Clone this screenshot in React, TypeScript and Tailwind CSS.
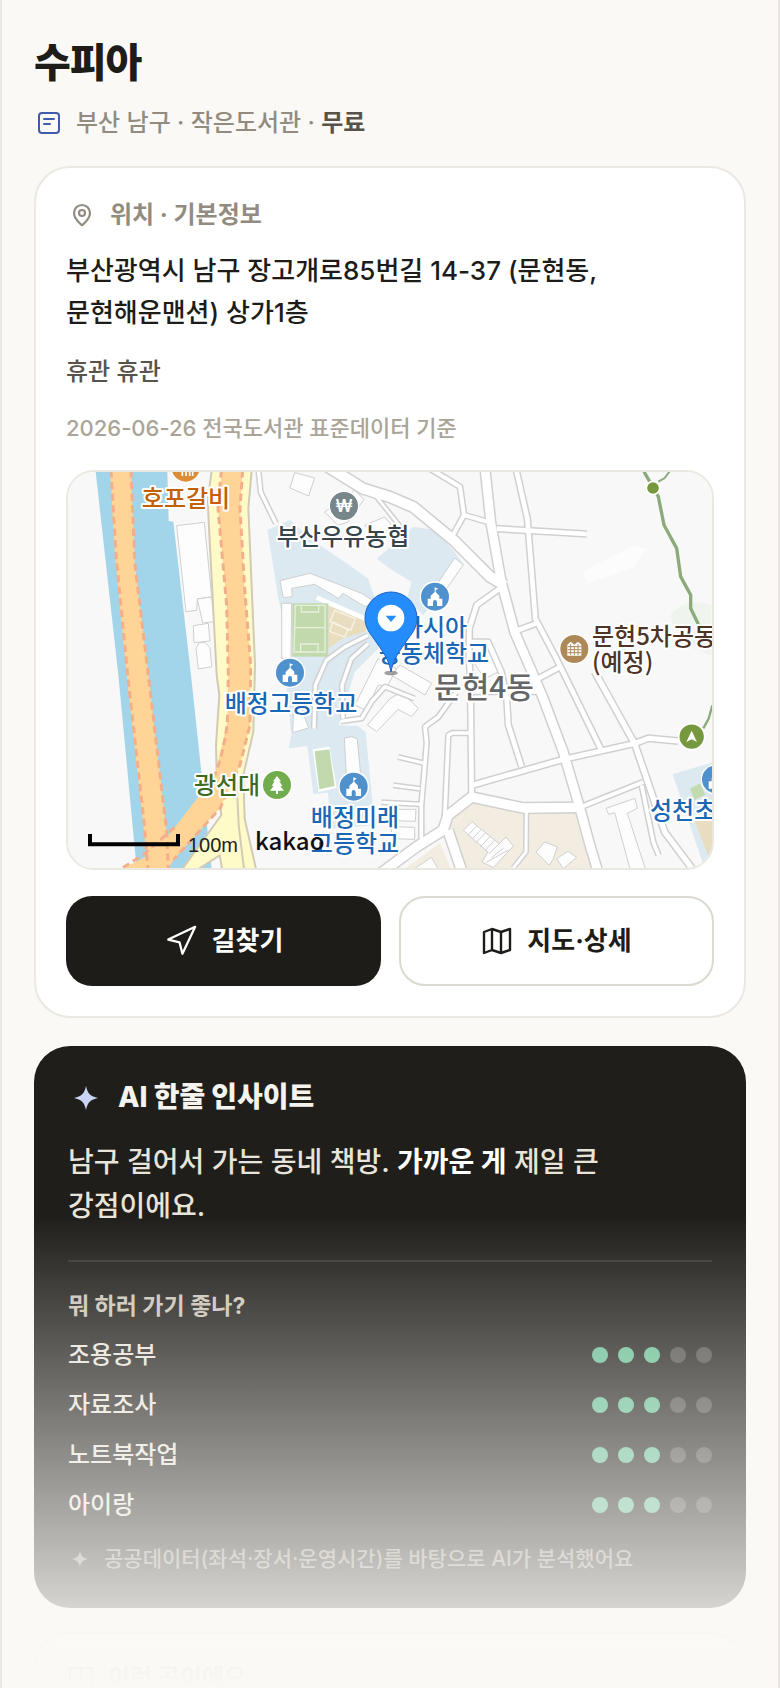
import { MapPin, Navigation } from 'lucide-react';

const fits = [
  { label: '조용공부', score: 3 },
  { label: '자료조사', score: 3 },
  { label: '노트북작업', score: 3 },
  { label: '아이랑', score: 3 },
];

// [points, width]
const roads: [string, number][] = [
  ['740,-40 886,50 966,75 1036,105 1156,204 1266,314 1311,340', 30],
  ['921,69 1010,180', 8],
  ['1251,-10 1268,149 1300,330 1340,480 1396,609 1426,680 1486,840 1536,1010 1566,1120 1590,1200', 26],
  ['1344,-10 1378,140 1391,300 1402,440 1460,550 1485,600 1600,834', 14],
  ['1086,-10 1176,44 1188,129 1261,150', 12],
  ['1188,129 1152,195', 12],
  ['1286,170 1556,186', 14],
  ['1296,349 1226,399 1204,469 1203,560 1206,600 1208,700 1211,965', 14],
  ['1351,474 1406,454', 14],
  ['1406,622 1476,585', 14],
  ['1204,510 1260,510 1300,600 1316,679 1321,759 1361,884', 14],
  ['1211,660 1420,660', 10],
  ['1211,940 1486,862 1701,814 1741,799 1830,807', 15],
  ['1580,599 1700,815 1736,920 1790,1080 1880,1200', 16],
  ['930,1210 1046,1124 1125,1075 1140,1030 1211,975 1366,1008 1540,1006', 28],
  ['1536,1006 1726,930', 12],
  ['1140,1075 1182,1200', 28],
  ['1375,1010 1374,1140 1336,1188', 9],
  ['1060,1100 1060,1000 1076,814 1071,764 1111,735 1165,660', 11],
  ['990,855 1066,873', 9],
  ['976,940 1056,950', 9],
  ['940,991 1056,997', 9],
  ['1130,1040 1141,790 1152,783 1205,783', 11],
  ['1721,940 1756,1110 1772,1150', 11],
  ['571,-10 578,60 624,155', 10],
  ['738,770 742,640 775,565 830,525 900,490', 10],
  ['818,748 881,739 911,689 951,644 990,660 1040,680', 10],
  ['825,740 822,640 850,560 900,515', 10],
];

const buildings = [
  '326,161 409,151 431,374 388,381 386,415 354,419',
  '388,381 431,375 438,449 404,453',
  '376,461 421,454 426,507 378,512',
  '384,529 394,512 411,512 426,527 431,584 391,591',
  '680,2 740,18 722,72 666,48',
  '770,120 830,80 860,55 888,82 840,150 810,160',
  '890,160 950,135 975,165 930,190',
  '636,326 726,304 881,364 921,390 891,404 825,364 811,379 740,337 671,349 673,374 646,377',
  '641,394 671,394 669,559 641,559',
  '677,700 700,710 722,768 674,782',
  '829,798 852,794 868,802 880,930 836,930',
  '861,699 930,560 985,590 960,640 930,640 895,715',
  '971,610 996,579 1091,634 1071,669',
  '898,759 966,680 1000,660 1051,709 1031,734 990,712 926,779',
  '1160,258 1186,278 1150,330 1120,370 1098,350',
  '1186,492 1260,520 1290,600 1250,620 1210,560',
  '970,1012 1044,1012 1042,1048 970,1046',
  '970,1064 1040,1066 1040,1102 970,1100',
  '1614,1009 1701,979 1708,1009 1678,1024 1732,1190 1686,1190 1640,1022 1622,1027',
  '1186,1075 1212,1049 1262,1090 1294,1115 1314,1095 1336,1122 1276,1187 1242,1170 1260,1140',
  '1404,1140 1430,1110 1468,1125 1456,1160 1444,1180',
  '1466,1160 1500,1138 1526,1156 1486,1190',
  '1040,1190 1090,1156 1110,1190',
];

const labels = [
  { text: '호포갈비', x: 118, y: 35, fill: '#c25f00' },
  { text: '부산우유농협', x: 275, y: 73, fill: '#36454c' },
  { text: '아시아', x: 366, y: 164, fill: '#1a67b5' },
  { text: '공동체학교', x: 366, y: 190, fill: '#1a67b5' },
  { text: '배정고등학교', x: 223, y: 240, fill: '#1a67b5' },
  { text: '광선대', x: 159, y: 322, fill: '#3d6a22' },
  { text: '배정미래', x: 287, y: 354, fill: '#1a67b5' },
  { text: '고등학교', x: 287, y: 380, fill: '#1a67b5' },
];

function SchoolMark({ x, y }: { x: number; y: number }) {
  return (
    <g transform={`translate(${x} ${y})`}>
      <circle r="46" fill="#fff" />
      <circle r="42" fill="#4f91cd" />
      <path
        d="M-1 -28V-14L-13 -3V6H-22V28H-6V16A6 6 0 0 1 6 16V28H22V6H13V-3L2 -14V-20L10 -24Z"
        fill="#fff"
      />
    </g>
  );
}

function LocationMap() {
  return (
    <svg
      viewBox="0 0 644 396"
      preserveAspectRatio="xMidYMid slice"
      role="img"
      aria-label="위치 지도"
      className="block h-full w-full font-['Noto_Sans_CJK_KR',sans-serif] font-medium"
    >
      <rect width="644" height="396" fill="#f8f8f8" />
      <g transform="scale(0.333333)">
        {/* Water */}
        <path d="M83 -1L151 609L206 1190H431L369 609L316 149L302 147L298 -1Z" fill="#a3d5ea" />

        {/* School grounds */}
        <g fill="#dce9f1">
          <path d="M598 174L666 144L746 214L836 274L900 320L921 380L960 460L930 530L860 600L812 760L870 762L893 780L920 1060L790 1070L780 962L736 966L718 822L662 829L670 790L655 640L640 420L631 379Z" />
          <path d="M926 260L986 210L1036 164L1101 174L1160 240L1185 275L1066 430L1016 385L1031 330L966 290Z" />
          <path d="M1814 907L1940 869V1190H1910Z" />
        </g>
        <path d="M1881 1049L1940 1000V1160L1920 1150Z" fill="#e9ddc0" />
        <path d="M1866 950L1896 934L1912 968L1880 984Z" fill="#c3daaf" />
        <path d="M781 397L896 449L891 479L826 499L781 529Z" fill="#e9ddc0" />
        <g fill="none" stroke="#f8f3e6" strokeWidth="4">
          <path d="M800 415L862 440L848 475L786 450Z" />
          <path d="M795 450L840 472L830 495L785 478Z" />
        </g>
        <path d="M746 377L891 440" stroke="#fff" strokeWidth="14" />

        <rect x="673" y="394" width="108" height="160" fill="#c1d9ad" />
        <g fill="none" stroke="#e6f0dc" strokeWidth="4">
          <path d="M682 400H771V540H678ZM680 467H771M700 400V420H752V400M698 540V516H750V540" />
        </g>
        <path d="M734 832L784 824L806 948L752 960Z" fill="#fff" />
        <path d="M740 838L784 832L800 942L754 952Z" fill="#c1d9ad" />

        {/* Apartment blocks */}
        <g fill="#f3ede1">
          <path d="M1146 1059L1166 1029L1216 989L1370 1018V1130L1331 1188H1186L1146 1100Z" />
          <path d="M1381 1018H1524L1574 1190H1350L1381 1140Z" />
          <path d="M1010 1190L1116 1114L1150 1190Z" />
        </g>
        <path d="M1808 427Q1860 370 1930 400V550Q1880 540 1850 470Q1810 470 1808 427Z" fill="#eff4ef" />
        <path d="M1544 299L1660 240L1690 218L1738 232L1695 288L1560 334Z" fill="#fcfcfc" />

        <g fill="#fdfdfd" stroke="#cfcfcf" strokeWidth="3">
          {buildings.map((points) => (
            <polygon key={points} points={points} />
          ))}
        </g>
        <path
          d="M1200 1090L1226 1062M1212 1101L1240 1072M1224 1112L1252 1083M1238 1124L1266 1094M1251 1136L1280 1104M1262 1146L1294 1115M1270 1158L1306 1128M1256 1170L1320 1135"
          stroke="#cfcfcf"
          strokeWidth="3"
        />

        {/* Streets: casing first, then the surface */}
        <g fill="none" stroke="#d0d0d0" strokeLinejoin="round">
          {roads.map(([points, width]) => (
            <polyline key={points} points={points} strokeWidth={width + 9} />
          ))}
        </g>
        <g fill="none" stroke="#fff" strokeLinejoin="round">
          {roads.map(([points, width]) => (
            <polyline key={points} points={points} strokeWidth={width} />
          ))}
        </g>

        {/* Riverside road */}
        <path
          d="M431 -5L419 89L446 609L454 669L444 819L446 900L460 1029L340 1195H385L455 1150L463 1195H565L530 1040L526 909L556 779L561 579L541 109L551 -5Z"
          fill="#fffbc9"
          stroke="#d2cab4"
          strokeWidth="6"
        />
        <path d="M506 930L512 1060L528 1190" fill="none" stroke="#d2cab4" strokeWidth="6" />

        {/* Highways */}
        <path
          d="M462 -5L450 109L476 400L481 609L478 750L441 909L326 1059L260 1140L160 1192H300L316 1164L456 1009L516 879L546 759L548 579L530 350L516 109L524 -5Z"
          fill="#ffd496"
        />
        <path
          d="M126 -5L141 249L176 609L226 1059L240 1192H301L296 1079L241 609L201 279L189 -5Z"
          fill="#ffd496"
        />
        <g fill="none" stroke="#f3ae8c" strokeWidth="9" strokeDasharray="22 13">
          <path d="M129 -5L144 249L179 609L229 1059L240 1192" />
          <path d="M189 -5L201 279L241 609L296 1079L301 1192" />
          <path d="M460 -5L450 109L476 400L481 609L478 750Q470 830 441 909" />
          <path d="M524 -5L516 109L530 350L548 579L546 759L516 879L456 1009L316 1164" />
          <path d="M320 1066L226 1148L160 1190" />
        </g>

        {/* Walking trail */}
        <g fill="none" stroke="#8cab7b" strokeWidth="10">
          <path d="M1728 -1L1771 74L1788 159L1826 229L1838 314L1868 369V409L1891 457" />
          <path d="M1933 700L1922 740L1906 769" strokeWidth="7" />
          <path d="M1771 29L1790 18L1804 -1" strokeWidth="6" />
        </g>
        <circle cx="1755" cy="48" r="20" fill="#76983f" stroke="#fff" strokeWidth="5" />
        <circle cx="1871" cy="794" r="39" fill="#76983f" stroke="#fff" strokeWidth="5" />
        <path d="M1871 776L1887 810L1871 802L1855 810Z" fill="#fff" />

        {/* Places */}
        <circle cx="353" cy="-13" r="44" fill="#dc8b37" stroke="#fff" strokeWidth="4" />
        <path d="M343 -8V12M354 -8V12M365 -8V12M374 -8V12" stroke="#fff" strokeWidth="5" />
        <circle cx="828" cy="102" r="44" fill="#77868b" stroke="#fff" strokeWidth="4" />
        <circle cx="627" cy="939" r="44" fill="#72ad4d" stroke="#fff" strokeWidth="4" />
        <path
          d="M627 912L639 928H634L643 942H637L648 956H630V966H624V956H606L617 942H611L620 928H615Z"
          fill="#fff"
        />
        <circle cx="1519" cy="531" r="44" fill="#ad8958" stroke="#fff" strokeWidth="4" />
        <path d="M1498 551V518L1508 509L1519 518L1530 509L1540 518V551Z" fill="#fff" />
        <path
          d="M1499 524H1539M1499 533H1539M1499 542H1539M1508 516V549M1519 522V549M1530 516V549"
          stroke="#ad8958"
          strokeWidth="3"
        />
        <SchoolMark x={666} y={602} />
        <SchoolMark x={1101} y={374} />
        <SchoolMark x={857} y={944} />
        <SchoolMark x={1944} y={922} />
      </g>

      <text
        x="276"
        y="40"
        textAnchor="middle"
        fontSize="17"
        fill="#fff"
        className="font-[Inter,sans-serif] font-semibold"
      >
        ₩
      </text>
      <g fontSize="24" stroke="#fff" strokeWidth="4" strokeLinejoin="round" paintOrder="stroke">
        {labels.map((label) => (
          <text key={label.text} x={label.x} y={label.y} textAnchor="middle" fill={label.fill}>
            {label.text}
          </text>
        ))}
        <text x="524" y="173" fill="#4d3426">
          문현5차공동
        </text>
        <text x="524" y="199" fill="#4d3426">
          (예정)
        </text>
        <text x="582" y="347" fill="#1a67b5">
          성천초
        </text>
        <text x="416" y="226" textAnchor="middle" fontSize="30" fill="#666">
          문현4동
        </text>
      </g>

      {/* Marker */}
      <g transform="scale(0.333333)">
        <ellipse cx="969" cy="603" rx="20" ry="7" fill="#777" opacity="0.7" />
        <path
          d="M969 600C962 560 945 540 916 498C900 478 891 460 891 438A78 78 0 0 1 1047 438C1047 460 1038 478 1022 498C993 540 976 560 969 600Z"
          fill="#258cfb"
          stroke="#1a62c6"
          strokeWidth="3"
        />
        <circle cx="969" cy="438" r="40" fill="#fff" />
        <path d="M953 431H985L969 450Z" fill="#258cfb" />
        {/* Scale */}
        <path d="M66 1086V1117H330V1086" fill="none" stroke="#000" strokeWidth="12" />
      </g>
      <text x="120" y="380" fontSize="20" fill="#222" className="font-['Liberation_Sans',sans-serif] font-normal">
        100m
      </text>
      <text x="187" y="378" fontSize="24" fill="#111">
        kakao
      </text>
    </svg>
  );
}

function Sparkle({ className }: { className?: string }) {
  return (
    <svg viewBox="0 0 24 24" fill="currentColor" aria-hidden="true" className={className}>
      <path d="M12 4C13 9 15 11 20 12C15 13 13 15 12 20C11 15 9 13 4 12C9 11 11 9 12 4Z" />
    </svg>
  );
}

function Score({ value }: { value: number }) {
  return (
    <span className="flex gap-2.5" role="img" aria-label={`5점 중 ${value}점`}>
      {[1, 2, 3, 4, 5].map((n) => (
        <span key={n} className={`size-4 rounded-full ${n <= value ? 'bg-[#65bd92]' : 'bg-white/20'}`} />
      ))}
    </span>
  );
}

export default function App() {
  return (
    <main className="relative h-screen overflow-hidden border-x-2 border-[#ebe8e1] bg-[#faf9f6] px-8 pt-9 font-[Inter,'Noto_Sans_CJK_KR',sans-serif] text-2xl font-medium text-[#1d1c18]">
      <header>
        <h1 className="text-[40px] leading-[54px] font-extrabold tracking-tight">수피아</h1>
        <div className="mt-4 flex h-[34px] items-center gap-3 text-[#928c80]">
          <svg
            viewBox="0 0 30 30"
            fill="none"
            stroke="#3f5bab"
            strokeWidth="2"
            strokeLinecap="round"
            aria-hidden="true"
            className="size-[30px]"
          >
            <rect x="5" y="5" width="20" height="20" rx="3" />
            <path d="M10 11H20M10 16H16" />
          </svg>
          <p>
            부산 남구 · 작은도서관 · <strong className="font-bold text-[#57534a]">무료</strong>
          </p>
        </div>
      </header>

      <section className="mt-[26px] rounded-[36px] border-2 border-[#ebe8e1] bg-white p-[30px]">
        <h2 className="flex h-[34px] items-center gap-3 font-bold text-[#928c80]">
          <MapPin className="size-8 p-1" strokeWidth={2.2} />
          위치 · 기본정보
        </h2>
        <p className="mt-[18px] text-[26px] leading-[42px]">
          부산광역시 남구 장고개로85번길 14-37 (문현동,
          <br />
          문현해운맨션) 상가1층
        </p>
        <p className="mt-5 leading-9 text-[#57534a]">휴관 휴관</p>
        <p className="mt-[22px] text-[22px] leading-8 text-[#aaa498]">2026-06-26 전국도서관 표준데이터 기준</p>

        <div className="mt-[26px] h-[400px] overflow-hidden rounded-[28px] border-2 border-[#ebe8e1]">
          <LocationMap />
        </div>

        <div className="mt-[26px] grid grid-cols-2 gap-[18px]">
          <button className="flex h-[90px] items-center justify-center gap-3.5 rounded-[26px] bg-[#1d1c18] text-[26px] font-bold text-white">
            <Navigation className="size-[34px]" strokeWidth={1.6} />
            길찾기
          </button>
          <button className="flex h-[90px] items-center justify-center gap-3.5 rounded-[26px] border-2 border-[#dcd9d0] bg-white text-[26px] font-bold">
            <svg
              viewBox="0 0 32 32"
              fill="none"
              stroke="currentColor"
              strokeWidth="2.4"
              strokeLinejoin="round"
              aria-hidden="true"
              className="size-8"
            >
              <path d="M3 7L11 4L20 7L29 4V25L20 28L11 25L3 28ZM11 4V25M20 7V28" />
            </svg>
            지도·상세
          </button>
        </div>
      </section>

      <section className="mt-7 rounded-[36px] bg-[#1f1e1a] p-[34px] text-[#e8e4da]">
        <h2 className="flex h-9 items-center gap-3.5 text-[28px] font-extrabold text-[#f5f3ee]">
          <Sparkle className="size-9 text-[#c9d5f5]" />
          AI 한줄 인사이트
        </h2>
        <p className="mt-6 text-[28px] leading-[44px]">
          남구 걸어서 가는 동네 책방. <strong className="font-bold text-white">가까운 게</strong> 제일 큰
          <br />
          강점이에요.
        </p>

        <div className="mt-8 border-t-2 border-white/10 pt-7">
          <h3 className="text-[23px] leading-8 font-bold text-[#c9c3b4]">뭐 하러 가기 좋나?</h3>
          <ul className="mt-2">
            {fits.map((fit) => (
              <li key={fit.label} className="flex h-[50px] items-center justify-between">
                {fit.label}
                <Score value={fit.score} />
              </li>
            ))}
          </ul>
          <p className="mt-3.5 flex h-[30px] items-center gap-3 text-[21px] text-[#928c80]">
            <Sparkle className="size-6" />
            공공데이터(좌석·장서·운영시간)를 바탕으로 AI가 분석했어요
          </p>
        </div>
      </section>

      <section className="mt-6 rounded-[36px] border-2 border-[#ebe8e1] bg-white p-[30px]">
        <h2 className="flex h-7 items-center gap-3 font-bold text-[#928c80]">
          <svg
            viewBox="0 0 30 30"
            fill="none"
            stroke="currentColor"
            strokeWidth="2"
            strokeLinejoin="round"
            aria-hidden="true"
            className="size-[30px]"
          >
            <path d="M4 5H26V25H4ZM15 5V25" />
          </svg>
          이런 곳이에요
        </h2>
      </section>

      <div className="pointer-events-none absolute inset-x-0 bottom-0 h-[28%] bg-linear-to-b from-[#faf9f6]/0 to-[#faf9f6]" />
    </main>
  );
}
